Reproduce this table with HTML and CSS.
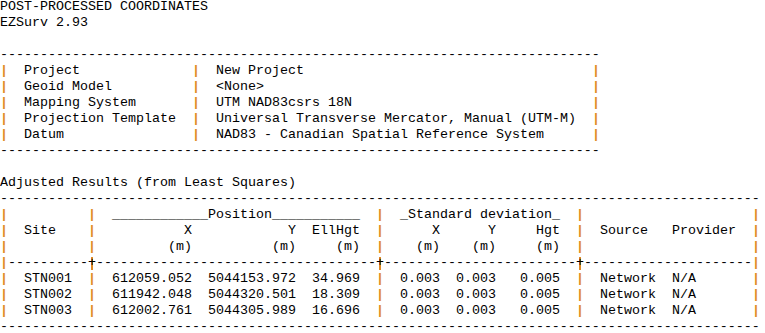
FILE: index.html
```html
<!DOCTYPE html>
<html>
<head>
<meta charset="utf-8">
<title>Post-processed coordinates</title>
<link rel="stylesheet" href="styles.css">
</head>
<body>
<div class="report">
  <div class="line">POST-PROCESSED COORDINATES</div>
  <div class="line">EZSurv 2.93</div>
  <div class="line blank"></div>

  <div class="line">---------------------------------------------------------------------------</div>
  <div class="line"><span class="p">|</span><span class="lab">Project</span><span class="p">|</span><span class="val">New Project</span><span class="p">|</span></div>
  <div class="line"><span class="p">|</span><span class="lab">Geoid Model</span><span class="p">|</span><span class="val">&lt;None&gt;</span><span class="p">|</span></div>
  <div class="line"><span class="p">|</span><span class="lab">Mapping System</span><span class="p">|</span><span class="val">UTM NAD83csrs 18N</span><span class="p">|</span></div>
  <div class="line"><span class="p">|</span><span class="lab">Projection Template</span><span class="p">|</span><span class="val">Universal Transverse Mercator, Manual (UTM-M)</span><span class="p">|</span></div>
  <div class="line"><span class="p">|</span><span class="lab">Datum</span><span class="p">|</span><span class="val">NAD83 - Canadian Spatial Reference System</span><span class="p">|</span></div>
  <div class="line">---------------------------------------------------------------------------</div>
  <div class="line blank"></div>

  <div class="line">Adjusted Results (from Least Squares)</div>
  <div class="line">-----------------------------------------------------------------------------------------------</div>

  <div class="line">
    <span class="p">|</span><span class="site"></span><span class="p">|</span><span class="pos pad">____________Position___________</span><span class="p">|</span><span class="std pad">_Standard deviation_</span><span class="p">|</span><span class="src"></span><span class="p">|</span>
  </div>
  <div class="line">
    <span class="p">|</span><span class="site pad">Site</span><span class="p">|</span><span class="pos"><span class="f12">X</span><span class="f13">Y</span><span class="f8">EllHgt</span></span><span class="p">|</span><span class="std"><span class="f7">X</span><span class="f7">Y</span><span class="f8">Hgt</span></span><span class="p">|</span><span class="src pad"><span class="f9">Source</span>Provider</span><span class="p">|</span>
  </div>
  <div class="line">
    <span class="p">|</span><span class="site"></span><span class="p">|</span><span class="pos"><span class="f12">(m)</span><span class="f13">(m)</span><span class="f8">(m)</span></span><span class="p">|</span><span class="std"><span class="f7">(m)</span><span class="f7">(m)</span><span class="f8">(m)</span></span><span class="p">|</span><span class="src"></span><span class="p">|</span>
  </div>
  <div class="line">
    <span class="p">|</span><span class="site">----------</span><span class="cross">+</span><span class="pos">-----------------------------------</span><span class="cross">+</span><span class="std">------------------------</span><span class="cross">+</span><span class="src">---------------------</span><span class="p">|</span>
  </div>
  <div class="line">
    <span class="p">|</span><span class="site pad">STN001</span><span class="p">|</span><span class="pos"><span class="f12">612059.052</span><span class="f13">5044153.972</span><span class="f8">34.969</span></span><span class="p">|</span><span class="std"><span class="f7">0.003</span><span class="f7">0.003</span><span class="f8">0.005</span></span><span class="p">|</span><span class="src pad"><span class="f9">Network</span>N/A</span><span class="p">|</span>
  </div>
  <div class="line">
    <span class="p">|</span><span class="site pad">STN002</span><span class="p">|</span><span class="pos"><span class="f12">611942.048</span><span class="f13">5044320.501</span><span class="f8">18.309</span></span><span class="p">|</span><span class="std"><span class="f7">0.003</span><span class="f7">0.003</span><span class="f8">0.005</span></span><span class="p">|</span><span class="src pad"><span class="f9">Network</span>N/A</span><span class="p">|</span>
  </div>
  <div class="line">
    <span class="p">|</span><span class="site pad">STN003</span><span class="p">|</span><span class="pos"><span class="f12">612002.761</span><span class="f13">5044305.989</span><span class="f8">16.696</span></span><span class="p">|</span><span class="std"><span class="f7">0.003</span><span class="f7">0.003</span><span class="f8">0.005</span></span><span class="p">|</span><span class="src pad"><span class="f9">Network</span>N/A</span><span class="p">|</span>
  </div>
  <div class="line">-----------------------------------------------------------------------------------------------</div>
</div>
</body>
</html>
```

FILE: styles.css
```css
html, body {
  margin: 0;
  padding: 0;
  background: #ffffff;
}

.report {
  font-family: "Liberation Mono", "Courier New", monospace;
  font-size: 13.333px;
  line-height: 16px;
  color: #000000;
  margin-top: -1px;
}

.line {
  display: flex;
  height: 16px;
  white-space: pre;
}

.line > span {
  display: block;
  flex: none;
  white-space: pre;
  box-sizing: border-box;
}

.blank {
  height: 16px;
}

.p {
  width: 8px;
  color: #e08a24;
  font-weight: bold;
}

.cross {
  width: 8px;
  background: linear-gradient(#e08a24, #e08a24) no-repeat 3px 2px / 2px 13px;
}

.lab {
  width: 184px;
  padding-left: 16px;
}

.val {
  width: 392px;
  padding-left: 16px;
}

.site { width: 80px; }
.pos  { width: 280px; display: flex !important; }
.std  { width: 192px; display: flex !important; }
.src  { width: 168px; display: flex !important; }

.pad { padding-left: 16px; }

.pos > span, .std > span {
  display: block;
  text-align: right;
  flex: none;
}

.f7  { width: 56px; }
.f8  { width: 64px; }
.f12 { width: 96px; }
.f13 { width: 104px; }
.f9  { width: 72px; display: block; flex: none; }
```
